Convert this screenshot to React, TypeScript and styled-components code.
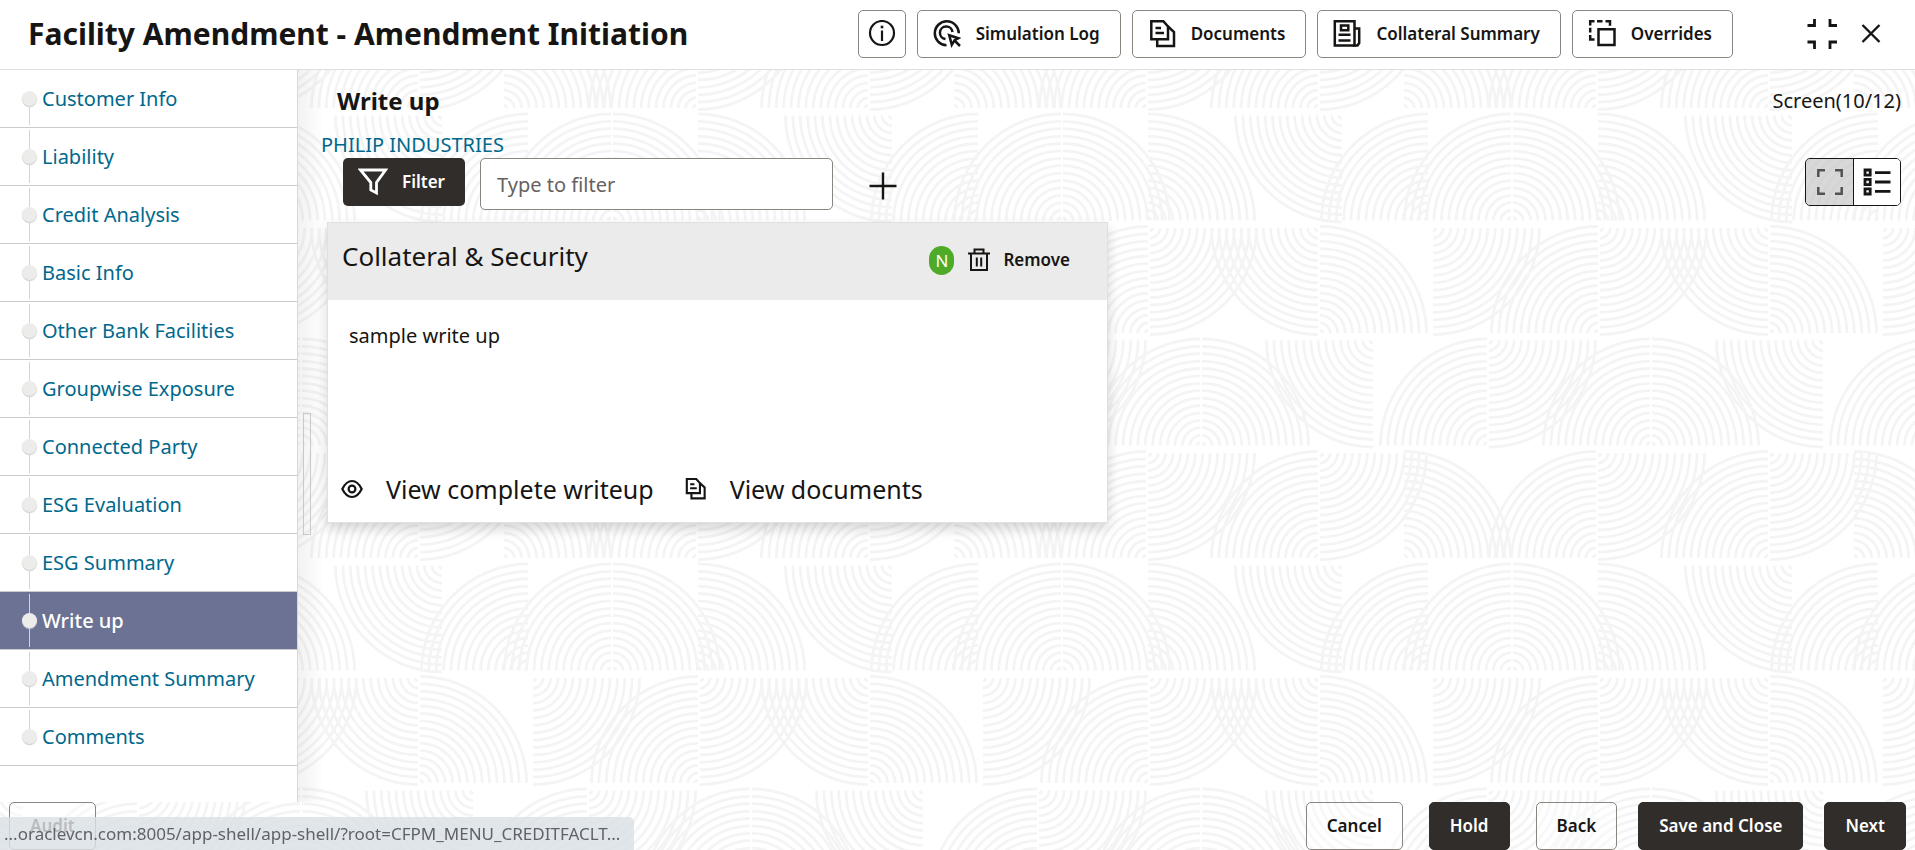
import React from "react";
import styled, { createGlobalStyle, css } from "styled-components";

const ink = "#161513";
const dark = "#312d2a";
const link = "#00688c";
const line = "#8b8580";

/* ---------- Ripple wallpaper ---------- */

type Quadrant = "UL" | "UR" | "LL" | "LR";

const TILE = 450;
const ROW = 112.5;

const rows: [number, Quadrant][][] = [
  [[53, "UR"], [247, "UL"], [247, "LR"], [419, "UL"], [419, "LR"]],
  [[79, "UL"], [162, "UL"], [162, "UR"], [247, "UR"], [443, "LL"]],
  [[249, "UL"], [249, "LR"], [419, "LL"], [419, "UR"], [82, "LR"]],
  [[138, "UL"], [138, "LR"], [301, "UL"], [301, "UR"], [24, "LL"]],
];

const ringPaths = (cx: number, cy: number, q: Quadrant) => {
  const sx = q[1] === "L" ? -1 : 1;
  const sy = q[0] === "U" ? -1 : 1;
  const sweep = sx * sy < 0 ? 1 : 0;
  let d = "";
  for (let i = 0; i < 15; i++) {
    const r = +(4 + i * 7.4).toFixed(1);
    d += `M${cx + sx} ${cy + sy * r}A${r} ${r} 0 0 ${sweep} ${cx + sx * r} ${cy + sy}`;
  }
  return d;
};

const wallpaper = (() => {
  let d = "";
  rows.forEach((row, i) =>
    row.forEach(([x, q]) => {
      const y = i * ROW + (q[0] === "U" ? 110 : 3);
      [-TILE, 0, TILE].forEach((shift) => {
        d += ringPaths(x + shift, y, q);
      });
    })
  );
  const svg = `<svg xmlns="http://www.w3.org/2000/svg" width="${TILE}" height="${TILE}" viewBox="0 0 ${TILE} ${TILE}"><path d="${d}" fill="none" stroke="#f4f4f4" stroke-width="2.8"/></svg>`;
  return `url("data:image/svg+xml,${encodeURIComponent(svg)}")`;
})();

const GlobalStyle = createGlobalStyle`
  *, *::before, *::after { box-sizing: border-box; }
  body {
    margin: 0;
    color: ${ink};
    font-family: "Noto Sans", "Open Sans", sans-serif;
    font-size: 20px;
    line-height: 28px;
  }
  button, input { font: inherit; color: inherit; }
  button { cursor: pointer; }
  h1, h2, h3, p, ul { margin: 0; padding: 0; }
  svg { display: block; flex: none; }
`;

const Page = styled.div`
  display: flex;
  flex-direction: column;
  min-height: 100vh;
  background: #fff ${wallpaper} 0 -1px;
`;

/* ---------- Header ---------- */

const Header = styled.header`
  display: flex;
  align-items: center;
  gap: 11px;
  padding: 10px 34px 11px 28px;
  background: #fff;
  border-bottom: 1px solid #dfdfdf;
`;

const PageTitle = styled.h1`
  flex: 1;
  font-size: 30px;
  line-height: 40px;
  font-weight: 700;
  white-space: nowrap;
`;

const buttonBase = css`
  display: flex;
  align-items: center;
  height: 48px;
  border-radius: 5px;
  white-space: nowrap;
  font-size: 17px;
  font-weight: 600;
`;

const ToolButton = styled.button<{ $iconOnly?: boolean }>`
  ${buttonBase}
  gap: 15px;
  padding: ${(p) => (p.$iconOnly ? "0 9px" : "0 20px 0 15px")};
  border: 1px solid ${line};
  background: #fff;
`;

const WindowControls = styled.div`
  display: flex;
  align-items: center;
  gap: 24px;
  margin-left: 63px;
`;

const BareButton = styled.button`
  display: flex;
  align-items: center;
  padding: 0;
  border: 0;
  background: none;
`;

/* ---------- Side navigation ---------- */

const Body = styled.div`
  display: grid;
  grid-template-columns: 298px minmax(0, 1fr);
  flex: 1;
`;

const SideNav = styled.nav`
  background: #fff;
  border-right: 1px solid #d8d8d8;
`;

const NavList = styled.ul`
  list-style: none;
`;

const NavLink = styled.a<{ $active?: boolean }>`
  display: flex;
  align-items: center;
  gap: 5px;
  height: 58px;
  padding-left: 22px;
  border-bottom: 1px solid #cbcbcb;
  text-decoration: none;
  color: ${(p) => (p.$active ? "#fff" : link)};
  background: ${(p) => (p.$active ? "#6b7294" : "#fff")};
  font-weight: ${(p) => (p.$active ? 500 : 400)};
`;

const Rail = styled.span`
  display: flex;
  flex-direction: column;
  align-items: center;
  width: 15px;
  height: 53px;
`;

const RailLine = styled.span<{ $hidden?: boolean }>`
  flex: 1;
  width: 1px;
  background: ${(p) => (p.$hidden ? "transparent" : "#d4d4d4")};
`;

const RailDot = styled.span`
  width: 15px;
  height: 15px;
  border-radius: 50%;
  background: #ececeb;
  box-shadow: 0 1px 1px #c9c9c9;
`;

/* ---------- Workspace ---------- */

const Workspace = styled.div`
  display: flex;
  background: linear-gradient(to right, rgba(0, 0, 0, 0.05), rgba(0, 0, 0, 0) 26px);
`;

const Splitter = styled.div`
  align-self: center;
  width: 8px;
  height: 122px;
  margin: 76px 10px 0 5px;
  border: 1px solid #c9c9c9;
`;

const Main = styled.main`
  flex: 1;
  min-width: 0;
  padding-right: 14px;
`;

const HeadingRow = styled.div`
  display: flex;
  align-items: center;
  justify-content: space-between;
  height: 62px;
  padding-left: 16px;
`;

const ScreenTitle = styled.h2`
  font-size: 24px;
  line-height: 32px;
  font-weight: 700;
`;

const CustomerLink = styled.a`
  display: block;
  width: fit-content;
  line-height: 26px;
  color: ${link};
  text-decoration: none;
`;

const Toolbar = styled.div`
  display: flex;
  align-items: flex-start;
  height: 52px;
  padding-left: 22px;
`;

const FilterButton = styled.button`
  ${buttonBase}
  gap: 14px;
  margin-right: 15px;
  padding: 0 20px 0 15px;
  border: 0;
  background: ${dark};
  color: #fff;
`;

const FilterInput = styled.input`
  width: 353px;
  height: 52px;
  padding: 0 16px;
  border: 1px solid ${line};
  border-radius: 5px;
  background: #fff;
  &::placeholder {
    color: #66625f;
    opacity: 1;
  }
`;

const AddButton = styled(BareButton)`
  height: 56px;
  margin-left: 35px;
`;

const ViewToggle = styled.div`
  display: flex;
  height: 48px;
  margin-left: auto;
  border: 1px solid ${ink};
  border-radius: 5px;
  overflow: hidden;
`;

const ToggleOption = styled.button<{ $muted?: boolean }>`
  display: flex;
  align-items: center;
  justify-content: center;
  width: 47px;
  padding: 0;
  border: 0;
  background: ${(p) => (p.$muted ? "rgba(190, 190, 190, 0.6)" : "#fff")};
  color: ${(p) => (p.$muted ? "#55524f" : ink)};
  & + & {
    border-left: 1px solid ${ink};
  }
`;

/* ---------- Write-up card ---------- */

const Card = styled.article`
  max-width: 781px;
  margin: 12px 0 0 6px;
  border: 1px solid #e0e0e0;
  background: #fff;
  box-shadow: 0 6px 12px rgba(0, 0, 0, 0.16);
`;

const CardHeader = styled.div`
  display: flex;
  justify-content: space-between;
  height: 77px;
  padding: 15px 37px 0 14px;
  background: #ebebeb;
`;

const CardTitle = styled.h3`
  font-size: 26px;
  line-height: 36px;
  font-weight: 400;
`;

const CardTools = styled.div`
  display: flex;
  align-items: center;
  gap: 14px;
  height: 44px;
`;

const StatusBadge = styled.span`
  width: 25px;
  border-radius: 13px;
  background: #4faa27;
  color: #fff;
  font-size: 17px;
  line-height: 29px;
  text-align: center;
`;

const RemoveButton = styled(BareButton)`
  gap: 13px;
  font-size: 17px;
  font-weight: 600;
`;

const CardText = styled.p`
  min-height: 169px;
  padding: 22px 21px 0;
`;

const CardActions = styled.div`
  display: flex;
  align-items: center;
  gap: 31px;
  padding: 0 13px 13px;
`;

const CardAction = styled(BareButton)`
  gap: 23px;
  font-size: 25px;
  line-height: 40px;
`;

/* ---------- Footer ---------- */

const Footer = styled.footer`
  display: flex;
  justify-content: space-between;
  padding: 0 9px;
`;

const FooterGroup = styled.div<{ $gap: number }>`
  display: flex;
  gap: ${(p) => p.$gap}px;
`;

const FooterButton = styled.button<{ $primary?: boolean }>`
  ${buttonBase}
  padding: 0 20px;
  border: 1px solid ${(p) => (p.$primary ? dark : line)};
  background: ${(p) => (p.$primary ? dark : "rgba(255, 255, 255, 0.4)")};
  color: ${(p) => (p.$primary ? "#fff" : ink)};
`;

const LinkStatus = styled.div`
  position: fixed;
  left: 0;
  bottom: 0;
  height: 33px;
  padding: 0 14px 0 4px;
  border-top-right-radius: 5px;
  background: rgba(218, 224, 229, 0.82);
  color: #5f6368;
  font-size: 17px;
  line-height: 34px;
`;

/* ---------- Icons ---------- */

const Icon = ({ w = 28, h = 28, sw = 2.2, children }: { w?: number; h?: number; sw?: number; children: React.ReactNode }) => (
  <svg width={w} height={h} viewBox={`0 0 ${w} ${h}`} fill="none" stroke="currentColor" strokeWidth={sw} aria-hidden="true">
    {children}
  </svg>
);

const InfoIcon = () => (
  <Icon>
    <circle cx="14" cy="13" r="12" />
    <path d="M14 10.500V21" />
    <path d="M12.700 7h2.600" strokeWidth="2.600" />
  </Icon>
);

const SimulationIcon = () => (
  <Icon sw={2.5}>
    <path d="M13.500 25.300A12 12 0 1 1 25.800 13.200" />
    <path d="M12.500 19A6.300 6.300 0 1 1 19.500 12" />
    <path d="M16.200 15.200L25.500 18.200L21.600 20.200L18.800 24.800Z" />
    <path d="M21.500 20.500L27 26" />
  </Icon>
);

const documentShapes = (
  <>
    <path d="M3.300 1.200H15.300L20 6.500V19.300H3.300Z" />
    <path d="M20 6.500L26 12V26H9.200V19.300" />
    <path d="M7.500 8H13M7.500 13H16" />
  </>
);

const DocumentsIcon = () => <Icon sw={2.5}>{documentShapes}</Icon>;

const SmallDocumentsIcon = () => (
  <svg width="22" height="24" viewBox="1 -1 28 30" fill="none" stroke="currentColor" strokeWidth="2.700" aria-hidden="true">
    {documentShapes}
  </svg>
);

const SummaryIcon = () => (
  <Icon sw={2.5}>
    <path d="M1.800 1.200H21.500V25.500H1.800Z" />
    <path d="M21.500 8.500H26.200V23L24.500 25.500H20" />
    <path d="M8 5.500H15.300V10.200H8Z" />
    <path d="M5.500 14.800H17.500M5.500 20.500H17.500" />
  </Icon>
);

const OverridesIcon = () => (
  <Icon sw={2.5}>
    <path d="M10.500 9.300H26.500V25H10.500Z" />
    <path d="M2.200 5.500V1.300H6.500M9 1.300H14.500M17.500 1.300H22V5.700M2.200 7.800V12.500M2.200 15V19.500H6.500" />
  </Icon>
);

const CollapseIcon = () => (
  <Icon w={30} h={30} sw={2.8}>
    <path d="M.500 6.500H7.500V0M30 6.500H23V0M.500 23H7.500V30M30 23H23V30" />
  </Icon>
);

const CloseIcon = () => (
  <Icon w={20} h={20} sw={2.4}>
    <path d="M1.500 1L18.500 18M18.500 1L1.500 18" />
  </Icon>
);

const FunnelIcon = () => (
  <Icon w={30} h={28} sw={2.8}>
    <path d="M2.500 2H27.500L18.500 14.500V25L12.800 22V14.500Z" />
  </Icon>
);

const PlusIcon = () => (
  <Icon w={30} h={28} sw={2.4}>
    <path d="M1.500 14H28.500M15 .500V27.500" />
  </Icon>
);

const ExpandIcon = () => (
  <Icon w={26} h={26} sw={2.5}>
    <path d="M1.300 8V1.300H8M18 1.300H24.700V8M24.700 18V24.700H18M8 24.700H1.300V18" />
  </Icon>
);

const ListIcon = () => (
  <Icon w={28} h={28} sw={2.8}>
    <path d="M2 2H7.200V7.200H2ZM2 11.400H7.200V16.600H2ZM2 20.800H7.200V26H2Z" />
    <path d="M12 4.600H27.500M12 14H27.500M12 23.400H27.500" />
  </Icon>
);

const TrashIcon = () => (
  <Icon w={22} h={24} sw={2}>
    <path d="M0 5.500H22M6.500 5.500V1.500H15.500V5.500M3 5.500V22H19V5.500M8.800 9.500V18.500M13.200 9.500V18.500" />
  </Icon>
);

const EyeIcon = () => (
  <Icon w={22} h={20} sw={2.2}>
    <path d="M1.300 10C4 4.500 7 2 11 2S18 4.500 20.700 10C18 15.500 15 18 11 18S4 15.500 1.300 10Z" />
    <circle cx="11" cy="10" r="3.400" />
  </Icon>
);

/* ---------- Screen ---------- */

const steps = [
  "Customer Info",
  "Liability",
  "Credit Analysis",
  "Basic Info",
  "Other Bank Facilities",
  "Groupwise Exposure",
  "Connected Party",
  "ESG Evaluation",
  "ESG Summary",
  "Write up",
  "Amendment Summary",
  "Comments",
];

const tools = [
  { label: "Simulation Log", icon: <SimulationIcon /> },
  { label: "Documents", icon: <DocumentsIcon /> },
  { label: "Collateral Summary", icon: <SummaryIcon /> },
  { label: "Overrides", icon: <OverridesIcon /> },
];

export default function App() {
  return (
    <>
      <GlobalStyle />
      <Page>
        <Header>
          <PageTitle>Facility Amendment - Amendment Initiation</PageTitle>
          <ToolButton $iconOnly aria-label="Information">
            <InfoIcon />
          </ToolButton>
          {tools.map((t) => (
            <ToolButton key={t.label}>
              {t.icon}
              {t.label}
            </ToolButton>
          ))}
          <WindowControls>
            <BareButton aria-label="Collapse">
              <CollapseIcon />
            </BareButton>
            <BareButton aria-label="Close">
              <CloseIcon />
            </BareButton>
          </WindowControls>
        </Header>

        <Body>
          <SideNav aria-label="Steps">
            <NavList>
              {steps.map((step, i) => (
                <li key={step}>
                  <NavLink href="#" $active={step === "Write up"}>
                    <Rail>
                      <RailLine $hidden={i === 0} />
                      <RailDot />
                      <RailLine $hidden={i === steps.length - 1} />
                    </Rail>
                    {step}
                  </NavLink>
                </li>
              ))}
            </NavList>
          </SideNav>

          <Workspace>
            <Splitter role="separator" aria-orientation="vertical" />
            <Main>
              <HeadingRow>
                <ScreenTitle>Write up</ScreenTitle>
                <span>Screen(10/12)</span>
              </HeadingRow>
              <CustomerLink href="#">PHILIP INDUSTRIES</CustomerLink>
              <Toolbar>
                <FilterButton>
                  <FunnelIcon />
                  Filter
                </FilterButton>
                <FilterInput type="text" placeholder="Type to filter" aria-label="Type to filter" />
                <AddButton aria-label="Add">
                  <PlusIcon />
                </AddButton>
                <ViewToggle>
                  <ToggleOption $muted aria-label="Card view">
                    <ExpandIcon />
                  </ToggleOption>
                  <ToggleOption aria-label="List view">
                    <ListIcon />
                  </ToggleOption>
                </ViewToggle>
              </Toolbar>

              <Card>
                <CardHeader>
                  <CardTitle>Collateral &amp; Security</CardTitle>
                  <CardTools>
                    <StatusBadge>N</StatusBadge>
                    <RemoveButton>
                      <TrashIcon />
                      Remove
                    </RemoveButton>
                  </CardTools>
                </CardHeader>
                <CardText>sample write up</CardText>
                <CardActions>
                  <CardAction>
                    <EyeIcon />
                    View complete writeup
                  </CardAction>
                  <CardAction>
                    <SmallDocumentsIcon />
                    View documents
                  </CardAction>
                </CardActions>
              </Card>
            </Main>
          </Workspace>
        </Body>

        <Footer>
          <FooterButton>Audit</FooterButton>
          <FooterGroup $gap={26}>
            <FooterButton>Cancel</FooterButton>
            <FooterButton $primary>Hold</FooterButton>
            <FooterGroup $gap={21}>
              <FooterButton>Back</FooterButton>
              <FooterButton $primary>Save and Close</FooterButton>
              <FooterButton $primary>Next</FooterButton>
            </FooterGroup>
          </FooterGroup>
        </Footer>
      </Page>
      <LinkStatus>...oraclevcn.com:8005/app-shell/app-shell/?root=CFPM_MENU_CREDITFACLT...</LinkStatus>
    </>
  );
}
